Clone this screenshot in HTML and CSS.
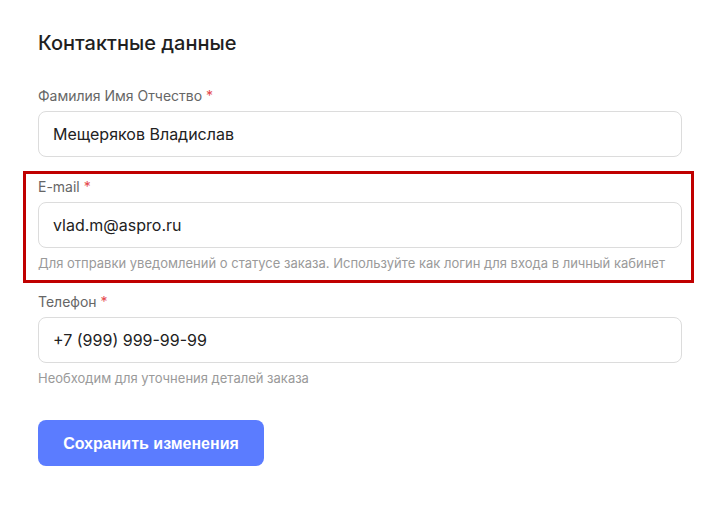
FILE: index.html
```html
<!DOCTYPE html>
<html lang="ru">
<head>
<meta charset="utf-8">
<title>Контактные данные</title>
<link rel="stylesheet" href="styles.css">
</head>
<body>
<main class="form">
  <h2 class="title">Контактные данные</h2>
  <div class="field">
    <label class="label">Фамилия Имя Отчество <span class="req">*</span></label>
    <div class="input">Мещеряков Владислав</div>
  </div>
  <div class="field field-marked">
    <span class="mark"></span>
    <label class="label">E-mail <span class="req">*</span></label>
    <div class="input">vlad.m@aspro.ru</div>
    <div class="hint">Для отправки уведомлений о статусе заказа. Используйте как логин для входа в личный кабинет</div>
  </div>
  <div class="field">
    <label class="label">Телефон <span class="req">*</span></label>
    <div class="input">+7 (999) 999-99-99</div>
    <div class="hint">Необходим для уточнения деталей заказа</div>
  </div>
  <button class="btn" type="button">Сохранить изменения</button>
</main>
</body>
</html>
```

FILE: styles.css
```css
html, body {
  margin: 0;
  padding: 0;
  background: #ffffff;
}
body {
  font-family: Inter, "Noto Sans", sans-serif;
  color: #222222;
}
.form {
  width: 644px;
  padding: 29px 0 0 38px;
  display: flex;
  flex-direction: column;
  align-items: flex-start;
}
.title {
  margin: 0 0 29px;
  font-size: 20px;
  line-height: 28px;
  font-weight: 500;
  color: #1f1f1f;
}
.field {
  position: relative;
  width: 644px;
  display: flex;
  flex-direction: column;
  margin-bottom: 20px;
}
.label {
  font-size: 14px;
  line-height: 20px;
  color: #666666;
  margin-bottom: 5px;
}
.req {
  color: #e5484d;
}
.input {
  box-sizing: border-box;
  height: 46px;
  border: 1px solid #dcdcdc;
  border-radius: 8px;
  padding: 0 14px;
  display: flex;
  align-items: center;
  font-size: 16px;
  color: #222222;
}
.hint {
  margin-top: 6px;
  font-size: 13px;
  line-height: 18px;
  color: #9a9a9a;
}
.mark {
  position: absolute;
  left: -15px;
  right: -12px;
  top: -6px;
  bottom: -11px;
  border: 3px solid #c00000;
  pointer-events: none;
}
.btn {
  margin-top: 13px;
  width: 226px;
  height: 46px;
  border: none;
  border-radius: 8px;
  background: #5b7cff;
  color: #ffffff;
  font-family: "Liberation Sans", Arial, sans-serif;
  font-weight: 700;
  font-size: 16px;
  padding: 2px 0 0;
}
```
